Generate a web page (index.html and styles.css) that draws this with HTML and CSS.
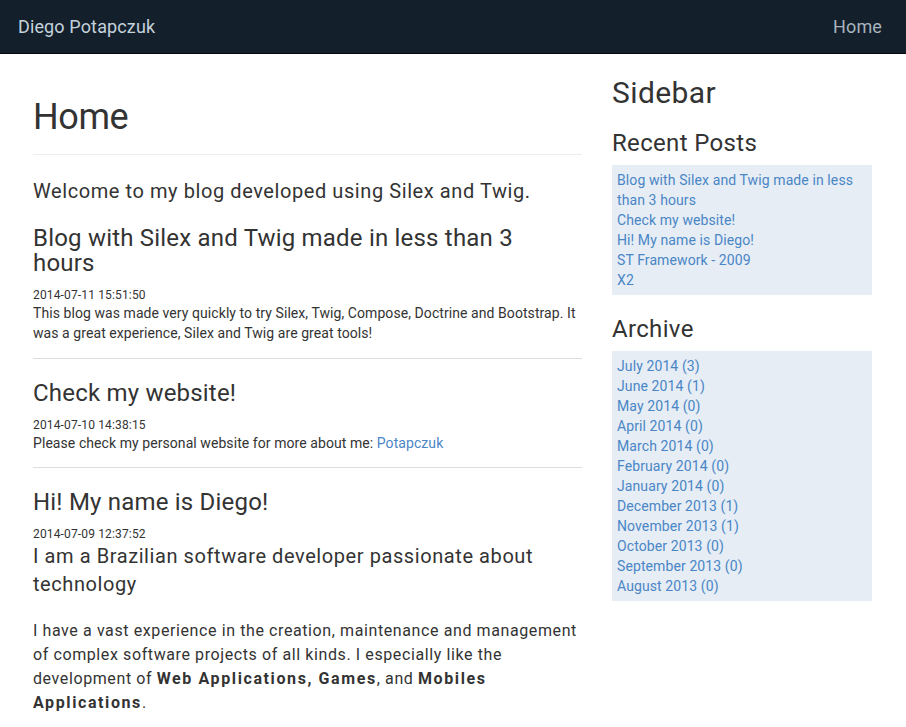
FILE: index.html
```html
<!DOCTYPE html>
<html lang="en">
<head>
<meta charset="utf-8">
<title>Diego Potapczuk</title>
<link rel="stylesheet" href="styles.css">
</head>
<body>
<nav class="navbar">
  <a class="brand" href="#">Diego Potapczuk</a>
  <a class="nav-link" href="#">Home</a>
</nav>
<div class="page">
  <main class="main">
    <div class="page-header"><h1>Home</h1></div>
    <p class="lead welcome">Welcome to my blog developed using Silex and Twig.</p>

    <article class="post first">
      <h3>Blog with Silex and Twig made in less than 3 hours</h3>
      <div class="date">2014-07-11 15:51:50</div>
      <p class="body">This blog was made very quickly to try Silex, Twig, Compose, Doctrine and Bootstrap. It was a great experience, Silex and Twig are great tools!</p>
    </article>

    <article class="post">
      <h3>Check my website!</h3>
      <div class="date">2014-07-10 14:38:15</div>
      <p class="body">Please check my personal website for more about me: <a href="#">Potapczuk</a></p>
    </article>

    <article class="post last">
      <h3>Hi! My name is Diego!</h3>
      <div class="date">2014-07-09 12:37:52</div>
      <p class="lead">I am a Brazilian software developer passionate about technology</p>
      <p class="big">I have a vast experience in the creation, maintenance and management of complex software projects of all kinds. I especially like the development of <b>Web Applications, Games</b>, and <b>Mobiles Applications</b>.</p>
    </article>
  </main>

  <aside class="sidebar">
    <h2>Sidebar</h2>
    <h3>Recent Posts</h3>
    <ul class="box">
      <li><a href="#">Blog with Silex and Twig made in less than 3 hours</a></li>
      <li><a href="#">Check my website!</a></li>
      <li><a href="#">Hi! My name is Diego!</a></li>
      <li><a href="#">ST Framework - 2009</a></li>
      <li><a href="#">X2</a></li>
    </ul>
    <h3>Archive</h3>
    <ul class="box">
      <li><a href="#">July 2014 (3)</a></li>
      <li><a href="#">June 2014 (1)</a></li>
      <li><a href="#">May 2014 (0)</a></li>
      <li><a href="#">April 2014 (0)</a></li>
      <li><a href="#">March 2014 (0)</a></li>
      <li><a href="#">February 2014 (0)</a></li>
      <li><a href="#">January 2014 (0)</a></li>
      <li><a href="#">December 2013 (1)</a></li>
      <li><a href="#">November 2013 (1)</a></li>
      <li><a href="#">October 2013 (0)</a></li>
      <li><a href="#">September 2013 (0)</a></li>
      <li><a href="#">August 2013 (0)</a></li>
    </ul>
  </aside>
</div>
</body>
</html>
```
FILE: styles.css
```css
* { box-sizing: border-box; }

body {
  margin: 0;
  background: #fff;
  color: #333;
  font-family: Roboto, "Liberation Sans", sans-serif;
  font-size: 14px;
  line-height: 20px;
}

a { color: #4a86c6; text-decoration: none; }

.navbar {
  height: 54px;
  background: #131f2b;
  border-bottom: 1px solid #05090d;
  display: flex;
  align-items: center;
  justify-content: space-between;
  padding: 0 24px 0 18px;
}

.brand {
  color: #c4d2dc;
  font-size: 18px;
  line-height: 20px;
  letter-spacing: 0.13px;
}

.nav-link {
  color: #a8b4bd;
  font-size: 18px;
  line-height: 20px;
  letter-spacing: 0.13px;
}

.page {
  display: grid;
  grid-template-columns: 549px 260px;
  column-gap: 30px;
  padding: 22px 0 0 33px;
  align-items: start;
}

h1, h2, h3, p { margin: 0; font-weight: 400; }

.page-header {
  margin-top: 21px;
  padding-bottom: 17px;
  border-bottom: 1px solid #eee;
}

.page-header h1 {
  font-size: 36px;
  line-height: 40px;
  letter-spacing: -0.4px;
}

.lead {
  font-size: 20px;
  line-height: 28px;
  letter-spacing: 0.58px;
}

.welcome {
  margin-top: 22px;
}

.post {
  margin-top: 22px;
  padding-bottom: 14px;
  border-bottom: 1px solid #ddd;
}

.post.first {
  margin-top: 21px;
  padding-bottom: 15px;
}

.post.last { border-bottom: 0; }

.post h3 {
  font-size: 24px;
  line-height: 25px;
  margin-bottom: 11px;
  padding-right: 12px;
  letter-spacing: 0.2px;
}

.date {
  font-size: 12px;
  line-height: 16px;
  letter-spacing: 0.15px;
}

.body {
  font-size: 14px;
  line-height: 20px;
  letter-spacing: 0.07px;
}

.post .lead { margin-top: 0; }

.big {
  margin-top: 21px;
  font-size: 16px;
  line-height: 24px;
  letter-spacing: 0.6px;
}

.big b {
  font-weight: 700;
  letter-spacing: 1.6px;
}

.sidebar {
  padding-top: 1px;
}

.sidebar h2 {
  font-size: 30px;
  line-height: 32px;
  letter-spacing: 0.4px;
}

.sidebar h3 {
  font-size: 24px;
  line-height: 26px;
  margin: 21px 0 9px;
  letter-spacing: 0.33px;
}

.box {
  list-style: none;
  margin: 0;
  padding: 5px;
  background: #e6edf5;
}

.box li {
  font-size: 14px;
  line-height: 20px;
  letter-spacing: 0.1px;
}
```
